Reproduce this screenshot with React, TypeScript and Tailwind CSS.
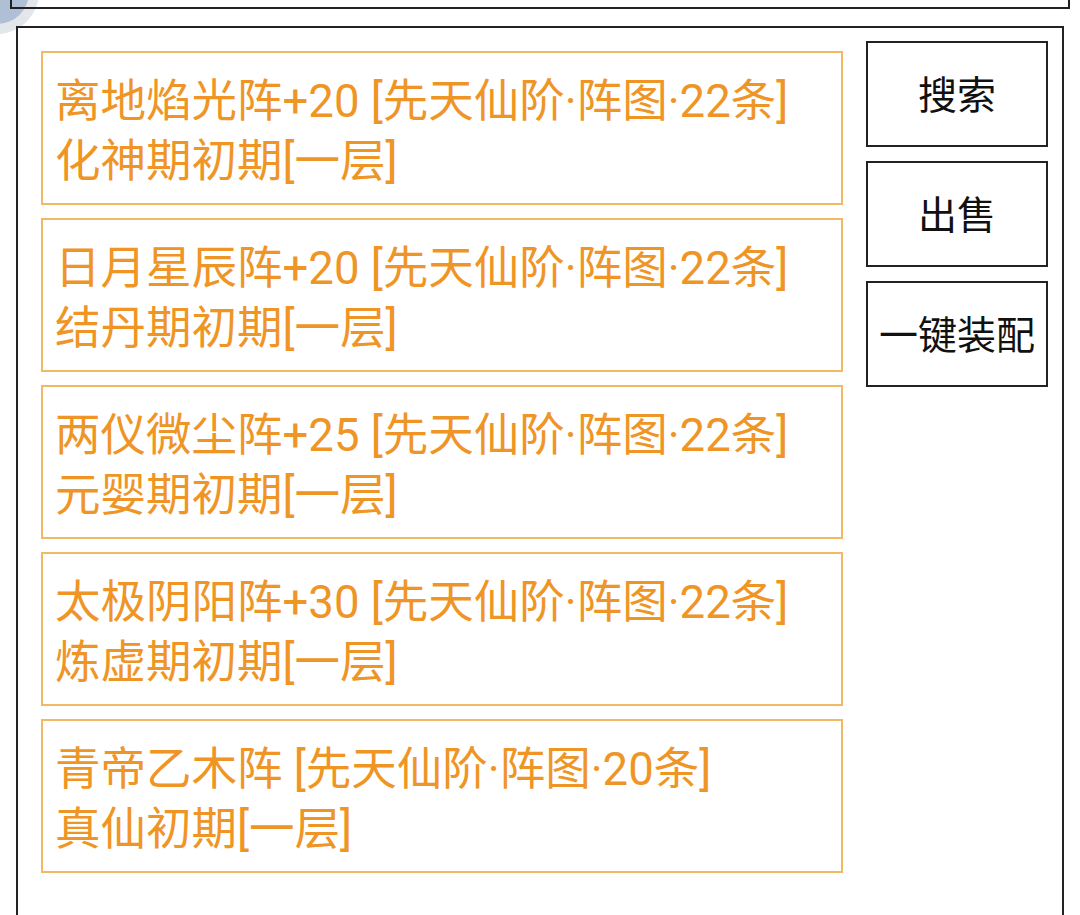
import React from "react";

const items = [
  ["离地焰光阵+20 [先天仙阶·阵图·22条]", "化神期初期[一层]"],
  ["日月星辰阵+20 [先天仙阶·阵图·22条]", "结丹期初期[一层]"],
  ["两仪微尘阵+25 [先天仙阶·阵图·22条]", "元婴期初期[一层]"],
  ["太极阴阳阵+30 [先天仙阶·阵图·22条]", "炼虚期初期[一层]"],
  ["青帝乙木阵 [先天仙阶·阵图·20条]", "真仙初期[一层]"],
];

const buttons = ["搜索", "出售", "一键装配"];

export default function App() {
  return (
    <div
      className="relative w-[1080px] h-[915px] overflow-hidden bg-white"
      style={{ fontFamily: 'Roboto, "Noto Sans CJK SC", sans-serif' }}
    >
      <div className="absolute left-[-45px] top-[-50px] w-[84px] h-[84px] rounded-full bg-[#e3e6ea] flex items-center justify-center">
        <div className="w-[64px] h-[64px] rounded-full bg-[#afc0d6]" />
      </div>
      <div className="relative mt-[-40px] mx-[10px] h-[49px] border-2 border-[#222]" />
      <div className="relative mt-[17px] ml-[16px] mr-[16px] h-[900px] border-2 border-[#222] flex items-start pl-[23px] pr-[14px]">
        <div className="w-[802px] mt-[23px] flex flex-col gap-[13px]">
          {items.map(([a, b], i) => (
            <div
              key={i}
              className="border-2 border-[#f1b866] pl-[12px] pt-[19px] pb-[11px] text-[45.5px] leading-[60px] text-[#ef9526] whitespace-nowrap"
            >
              <div>{a}</div>
              <div>{b}</div>
            </div>
          ))}
        </div>
        <div className="ml-[23px] w-[182px] mt-[13px] flex flex-col gap-[14px]">
          {buttons.map((t) => (
            <div
              key={t}
              className="h-[106px] border-2 border-[#222] flex items-center justify-center pt-[4px] text-[39px] text-[#111]"
            >
              {t}
            </div>
          ))}
        </div>
      </div>
    </div>
  );
}
